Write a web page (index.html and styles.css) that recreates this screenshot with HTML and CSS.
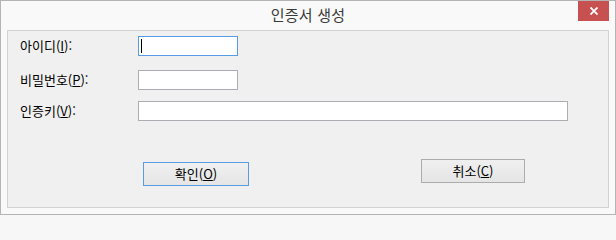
FILE: index.html
```html
<!DOCTYPE html>
<html lang="ko">
<head>
<meta charset="utf-8">
<title>인증서 생성</title>
<link rel="stylesheet" href="styles.css">
</head>
<body>
<div class="window">
  <div class="titlebar">
    <span class="spacer"></span>
    <span class="title">인증서 생성</span>
    <span class="close"><svg width="8" height="8" viewBox="0 0 8 8"><path d="M0.5 0.5L7.5 7.5M7.5 0.5L0.5 7.5" stroke="#fff" stroke-width="1.8" fill="none"/></svg></span>
  </div>
  <div class="panel">
    <div class="row row-id">
      <span class="label">아이디(<u>I</u>):</span>
      <div class="field field-short focused"><span class="caret"></span></div>
    </div>
    <div class="row row-pw">
      <span class="label">비밀번호(<u>P</u>):</span>
      <div class="field field-short"></div>
    </div>
    <div class="row row-key">
      <span class="label">인증키(<u>V</u>):</span>
      <div class="field field-long"></div>
    </div>
    <div class="buttons">
      <div class="btn btn-ok">확인(<u>O</u>)</div>
      <div class="btn btn-cancel">취소(<u>C</u>)</div>
    </div>
  </div>
</div>
</body>
</html>
```
FILE: styles.css
```css
html, body {
  margin: 0;
  padding: 0;
  background: #f7f7f7;
}
.window {
  box-sizing: border-box;
  width: 616px;
  height: 215px;
  border: 1px solid #b4b4b4;
  background: #f9f9f9;
  padding: 0 6px 6px 6px;
  display: flex;
  flex-direction: column;
  font-family: "Noto Sans CJK KR", "Noto Sans", sans-serif;
  font-size: 13px;
  color: #000;
}
.titlebar {
  height: 29px;
  display: grid;
  grid-template-columns: 1fr auto 1fr;
  align-items: start;
}
.title {
  font-size: 15px;
  color: #3a3a3a;
  line-height: 28px;
  letter-spacing: 0.2px;
}
.close {
  justify-self: end;
  width: 31px;
  height: 20px;
  background: #c75050;
  display: flex;
  align-items: center;
  justify-content: center;
}
.panel {
  flex: 1;
  border: 1px solid #d2d2d2;
  background: #f0f0f0;
  padding: 0 0 0 12px;
  display: flex;
  flex-direction: column;
}
.row {
  display: flex;
  align-items: center;
  height: 20px;
}
.row-id { margin-top: 5px; }
.row-pw { margin-top: 14px; }
.row-key { margin-top: 11px; }
.label {
  width: 118px;
  line-height: 20px;
  white-space: nowrap;
}
u {
  text-decoration-thickness: 1px;
  text-underline-offset: 1px;
}
.field {
  box-sizing: border-box;
  height: 20px;
  border: 1px solid #abadb3;
  background: #fff;
  position: relative;
}
.field-short { width: 100px; }
.field-long { width: 430px; }
.field.focused { border-color: #569de5; }
.caret {
  position: absolute;
  left: 2px;
  top: 2px;
  width: 1px;
  height: 14px;
  background: #000;
}
.buttons {
  display: flex;
  align-items: flex-start;
  margin-top: 38px;
  padding-left: 123px;
}
.btn {
  box-sizing: border-box;
  height: 24px;
  border: 1px solid #acacac;
  background: linear-gradient(#f0f0f0, #e5e5e5);
  display: flex;
  align-items: center;
  justify-content: center;
  line-height: 20px;
}
.btn-ok {
  width: 106px;
  margin-top: 3px;
  border-color: #569de5;
}
.btn-cancel {
  width: 104px;
  margin-left: 172px;
}
```
